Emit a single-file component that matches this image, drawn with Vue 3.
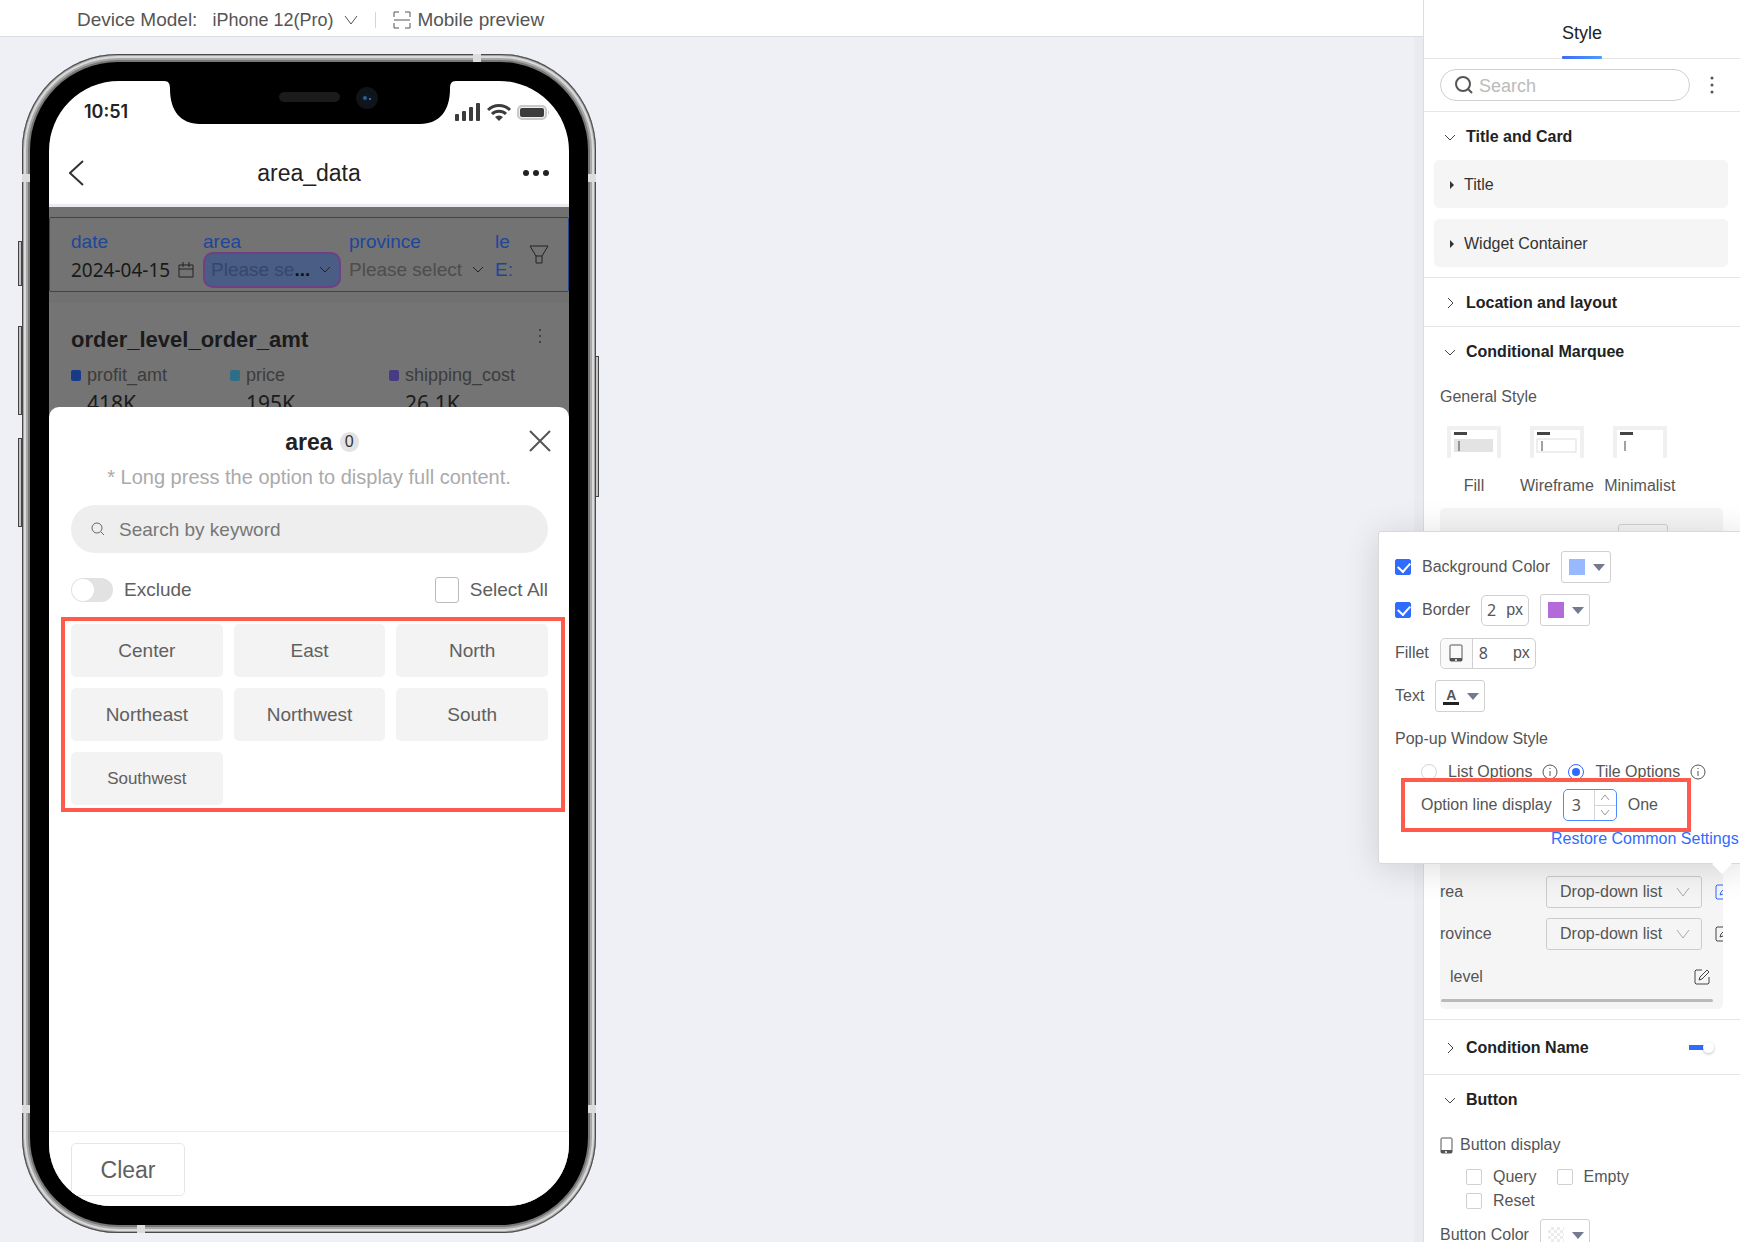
<template>
  <div class="page">
    <main class="workspace">
      <header class="toolbar">
        <label class="toolbar-label" for="device">Device Model:</label>
        <span class="device">
          <select id="device" v-model="device">
            <option>iPhone 12(Pro)</option>
          </select>
          <svg width="14" height="10" viewBox="0 0 14 10"><path d="M1 1l6 8 6-8" /></svg>
        </span>
        <span class="toolbar-split"></span>
        <button class="preview" type="button">
          <svg width="18" height="18" viewBox="0 0 18 18"><path d="M1 6V1h5M12 1h5v5M1 12v5h5M12 17h5v-5M1 9h16" /></svg>
          Mobile preview
        </button>
      </header>

      <div class="stage">
        <div class="phone">
          <i v-for="name in ['mute', 'vol-up', 'vol-down', 'power']" :key="name" class="key" :class="name"></i>
          <i v-for="name in ['lt', 'lb', 'rt', 'rb', 'top', 'bottom']" :key="name" class="band" :class="name"></i>
          <div class="bezel">
            <div class="screen">
              <svg class="notch" width="292" height="43" viewBox="0 0 292 43">
                <path fill="#000" d="M0 0C5 0 6 3 6 8C6 29 16 43 36 43H256C276 43 286 29 286 8C286 3 287 0 292 0Z" />
                <rect x="115" y="11" width="61" height="10" rx="5" fill="#1b1b1b" />
                <circle cx="203" cy="17" r="11" fill="#111317" />
                <circle cx="203" cy="17" r="6" fill="#0d1624" />
                <circle cx="201" cy="17" r="2" fill="#2f5e91" />
                <circle cx="206" cy="18" r="1" fill="#4b86bd" />
              </svg>
              <div class="status">
                <span class="clock">10:51</span>
                <span class="signals">
                  <svg width="26" height="18" viewBox="0 0 26 18" fill="#3c3c3c">
                    <rect x="0" y="11" width="4" height="7" rx="1" />
                    <rect x="7" y="8" width="4" height="10" rx="1" />
                    <rect x="14" y="4" width="4" height="14" rx="1" />
                    <rect x="21" y="0" width="4" height="18" rx="1" />
                  </svg>
                  <svg width="24" height="18" viewBox="0 0 24 18" fill="none" stroke="#3c3c3c" stroke-width="3">
                    <path d="M1 7a15.500 15.500 0 0 1 22 0M5 11a10 10 0 0 1 14 0" />
                    <path d="M8 14a6 6 0 0 1 8 0l-4 4z" fill="#3c3c3c" stroke="none" />
                  </svg>
                  <svg width="33" height="15" viewBox="0 0 33 15">
                    <rect x="1" y="1" width="28" height="13" rx="4" fill="#eee" stroke="#c9c9c9" stroke-width="2" />
                    <rect x="3" y="3" width="24" height="9" rx="2" fill="#3c3c3c" />
                    <path d="M31 5q2 2 0 5z" fill="#c9c9c9" />
                  </svg>
                </span>
              </div>
              <div class="nav">
                <button class="bare" type="button" aria-label="Back">
                  <svg width="15" height="26" viewBox="0 0 15 26" fill="none" stroke="#333" stroke-width="2"><path d="M14 1L1 13l13 12" /></svg>
                </button>
                <h1>area_data</h1>
                <button class="bare nav-more" type="button" aria-label="More">
                  <svg width="26" height="8" viewBox="0 0 26 8" fill="#222"><circle cx="3" cy="4" r="3" /><circle cx="13" cy="4" r="3" /><circle cx="23" cy="4" r="3" /></svg>
                </button>
              </div>

              <div class="body">
                <div class="filters">
                  <div class="filter date">
                    <span class="filter-name">date</span>
                    <span class="filter-value">2024-04-15
                      <svg width="16" height="16" viewBox="0 0 16 16"><path d="M1 3h14v12H1zM1 7h14M5 0v5M11 0v5" /></svg>
                    </span>
                  </div>
                  <div class="filter area">
                    <span class="filter-name">area</span>
                    <span class="filter-value boxed"><span>Please se<b>...</b></span>
                      <svg width="12" height="8" viewBox="0 0 12 8"><path d="M1 1l5 5 5-5" /></svg>
                    </span>
                  </div>
                  <div class="filter province">
                    <span class="filter-name">province</span>
                    <span class="filter-value muted">Please select
                      <svg width="12" height="8" viewBox="0 0 12 8"><path d="M1 1l5 5 5-5" /></svg>
                    </span>
                  </div>
                  <div class="filter cut">
                    <span class="filter-name">le</span>
                    <span class="filter-value link">E:</span>
                  </div>
                  <svg class="funnel" width="20" height="19" viewBox="0 0 20 19"><path d="M1 1h18l-6 10H7zM7 11v7h6v-7" /></svg>
                </div>
                <div class="card">
                  <div class="card-head">
                    <h2>order_level_order_amt</h2>
                    <svg width="4" height="16" viewBox="0 0 4 16" fill="#333"><circle cx="2" cy="2" r="1" /><circle cx="2" cy="8" r="1" /><circle cx="2" cy="14" r="1" /></svg>
                  </div>
                  <div class="metrics">
                    <div v-for="m in metrics" :key="m.name" class="metric">
                      <i :style="{ background: m.color }"></i>
                      <span>{{ m.name }}</span>
                      <strong>{{ m.value }}</strong>
                    </div>
                  </div>
                </div>

                <section class="sheet">
                  <div class="sheet-head">
                    <h2>area</h2>
                    <span class="count">0</span>
                    <button class="bare close" type="button" aria-label="Close">
                      <svg width="22" height="22" viewBox="0 0 22 22" fill="none" stroke="#555" stroke-width="2"><path d="M1 1l20 20M21 1L1 21" /></svg>
                    </button>
                  </div>
                  <p class="hint">* Long press the option to display full content.</p>
                  <div class="keyword">
                    <svg width="14" height="14" viewBox="0 0 14 14" fill="none" stroke="#666"><circle cx="6" cy="6" r="5" /><path d="M10 10l3 3" /></svg>
                    <input v-model="keyword" type="text" placeholder="Search by keyword" aria-label="Search by keyword" />
                  </div>
                  <div class="toggles">
                    <label><input v-model="exclude" class="switch" type="checkbox" />Exclude</label>
                    <label><input v-model="all" class="pick" type="checkbox" />Select All</label>
                  </div>
                  <div class="tiles">
                    <button v-for="a in areas" :key="a" type="button" :class="{ small: a === 'Southwest' }">{{ a }}</button>
                  </div>
                  <div class="sheet-foot">
                    <button type="button">Clear</button>
                  </div>
                </section>
              </div>
            </div>
          </div>
        </div>
      </div>
    </main>

    <aside class="panel">
      <div class="tabs"><button type="button">Style</button></div>
      <div class="find">
        <label class="find-box">
          <svg width="18" height="18" viewBox="0 0 18 18" fill="none" stroke="#555" stroke-width="2"><circle cx="8" cy="8" r="7" /><path d="M13 13l4 4" /></svg>
          <input v-model="search" type="text" placeholder="Search" aria-label="Search" />
        </label>
        <button class="bare" type="button" aria-label="Options">
          <svg width="4" height="18" viewBox="0 0 4 18" fill="#555"><circle cx="2" cy="2" r="1.500" /><circle cx="2" cy="9" r="1.500" /><circle cx="2" cy="16" r="1.500" /></svg>
        </button>
      </div>

      <section class="group">
        <h3><svg class="caret" width="12" height="12" viewBox="0 0 12 12"><path d="M1 4l5 5 5-5" /></svg>Title and Card</h3>
        <button v-for="t in ['Title', 'Widget Container']" :key="t" class="fold" type="button">
          <svg width="4" height="8" viewBox="0 0 4 8" fill="#333"><path d="M0 0l4 4-4 4z" /></svg>{{ t }}
        </button>
      </section>
      <section class="group closed">
        <h3><svg class="caret" width="12" height="12" viewBox="0 0 12 12"><path d="M4 1l5 5-5 5" /></svg>Location and layout</h3>
      </section>

      <section class="group">
        <h3><svg class="caret" width="12" height="12" viewBox="0 0 12 12"><path d="M1 4l5 5 5-5" /></svg>Conditional Marquee</h3>
        <p class="sub">General Style</p>
        <div class="looks">
          <button type="button">
            <svg width="54" height="32" viewBox="0 0 54 32"><path d="M2 32V2h50v30" fill="none" stroke="#f0f0f0" stroke-width="4" /><rect x="7" y="6" width="13" height="3" fill="#444" /><rect x="7" y="13" width="39" height="13" fill="#e3e3e3" /><path d="M12 15v10" stroke="#444" /></svg>
            Fill
          </button>
          <button type="button">
            <svg width="54" height="32" viewBox="0 0 54 32"><path d="M2 32V2h50v30" fill="none" stroke="#f0f0f0" stroke-width="4" /><rect x="7" y="6" width="13" height="3" fill="#444" /><rect x="7" y="13" width="39" height="13" fill="#fff" stroke="#ddd" /><path d="M12 15v10" stroke="#444" /></svg>
            Wireframe
          </button>
          <button type="button">
            <svg width="54" height="32" viewBox="0 0 54 32"><path d="M2 32V2h50v30" fill="none" stroke="#f0f0f0" stroke-width="4" /><rect x="7" y="6" width="13" height="3" fill="#444" /><path d="M12 15v10" stroke="#444" /></svg>
            Minimalist
          </button>
        </div>

        <div class="fields">
          <div class="fields-box">
            <button class="swatch ghost" type="button" aria-label="Color"></button>
            <div v-for="(f, i) in fields" :key="f" class="field">
              <label :for="'field-' + i">{{ f }}</label>
              <span class="drop">
                <select :id="'field-' + i"><option>Drop-down list</option></select>
                <svg width="14" height="10" viewBox="0 0 14 10"><path d="M1 1l6 8 6-8" /></svg>
              </span>
              <svg class="edit" :class="{ active: i === 0 }" width="16" height="16" viewBox="0 0 16 16"><path d="M8 1H2L1 2v12l1 1h12l1-1V8M5 11l1-3 7-7 2 2-7 7z" /></svg>
            </div>
            <div class="field level">
              <span>level</span>
              <svg class="edit" width="16" height="16" viewBox="0 0 16 16"><path d="M8 1H2L1 2v12l1 1h12l1-1V8M5 11l1-3 7-7 2 2-7 7z" /></svg>
            </div>
            <div class="scrollbar"></div>
          </div>

          <div class="popover">
            <div class="row">
              <label class="check"><input v-model="background" type="checkbox" />Background Color</label>
              <button class="swatch" type="button" aria-label="Background color"><i class="blue"></i><i class="tri"></i></button>
            </div>
            <div class="row">
              <label class="check"><input v-model="border" type="checkbox" />Border</label>
              <span class="unit"><input v-model="borderWidth" type="text" aria-label="Border width" />px</span>
              <button class="swatch" type="button" aria-label="Border color"><i class="purple"></i><i class="tri"></i></button>
            </div>
            <div class="row">
              <label for="fillet">Fillet</label>
              <span class="unit wide">
                <span class="unit-icon"><svg width="14" height="18" viewBox="0 0 14 18"><rect x="1" y="1" width="12" height="16" rx="1" fill="none" stroke="#555" /><path d="M1 14h12v3H1z" fill="#555" /><circle cx="7" cy="16" r="1" fill="#fff" /></svg></span>
                <input id="fillet" v-model="fillet" type="text" />px
              </span>
            </div>
            <div class="row">
              <span>Text</span>
              <button class="swatch" type="button" aria-label="Text color"><b>A</b><i class="tri"></i></button>
            </div>
            <div class="row">Pop-up Window Style</div>
            <div class="radios">
              <label><input v-model="mode" type="radio" name="mode" value="list" />List Options</label>
              <svg width="16" height="16" viewBox="0 0 16 16"><circle cx="8" cy="8" r="7" /><path d="M8 7v5M8 4v1" /></svg>
              <label><input v-model="mode" type="radio" name="mode" value="tile" />Tile Options</label>
              <svg width="16" height="16" viewBox="0 0 16 16"><circle cx="8" cy="8" r="7" /><path d="M8 7v5M8 4v1" /></svg>
            </div>
            <div class="per-line">
              <label for="per-line">Option line display</label>
              <span class="stepper">
                <input id="per-line" v-model.number="perLine" type="text" />
                <span class="steps">
                  <button type="button" aria-label="Increase" @click="perLine++"><svg width="8" height="6" viewBox="0 0 8 6"><path d="M0 6l4-5 4 5" /></svg></button>
                  <button type="button" aria-label="Decrease" @click="perLine--"><svg width="8" height="6" viewBox="0 0 8 6"><path d="M0 0l4 5 4-5" /></svg></button>
                </span>
              </span>
              <span>One</span>
            </div>
            <a href="#" class="restore" @click.prevent="perLine = 3">Restore Common Settings</a>
          </div>
        </div>
      </section>

      <section class="group closed named">
        <h3><svg class="caret" width="12" height="12" viewBox="0 0 12 12"><path d="M4 1l5 5-5 5" /></svg>Condition Name</h3>
        <input v-model="named" class="slide" type="checkbox" aria-label="Condition Name" />
      </section>

      <section class="group">
        <h3><svg class="caret" width="12" height="12" viewBox="0 0 12 12"><path d="M1 4l5 5 5-5" /></svg>Button</h3>
        <p class="sub">
          <svg width="13" height="17" viewBox="0 0 13 17"><rect x="1" y="1" width="11" height="15" rx="1" fill="none" stroke="#555" /><path d="M1 13h11v3H1z" fill="#555" /><circle cx="6" cy="15" r="1" fill="#fff" /></svg>
          Button display
        </p>
        <div class="buttons">
          <label v-for="b in ['Query', 'Empty', 'Reset']" :key="b" class="check"><input type="checkbox" />{{ b }}</label>
        </div>
        <div class="row color-row">
          <span>Button Color</span>
          <button class="swatch" type="button" aria-label="Button color"><i class="clear"></i><i class="tri"></i></button>
        </div>
      </section>
    </aside>
  </div>
</template>

<script setup>
import { ref } from 'vue';

const device = ref('iPhone 12(Pro)');
const keyword = ref('');
const search = ref('');
const exclude = ref(false);
const all = ref(false);
const background = ref(true);
const border = ref(true);
const borderWidth = ref('2');
const fillet = ref('8');
const mode = ref('tile');
const perLine = ref(3);
const named = ref(true);

const areas = ['Center', 'East', 'North', 'Northeast', 'Northwest', 'South', 'Southwest'];
const fields = ['rea', 'rovince'];
const metrics = [
  { name: 'profit_amt', value: '418K', color: '#173b86' },
  { name: 'price', value: '195K', color: '#2f6e86' },
  { name: 'shipping_cost', value: '26.1K', color: '#463c82' },
];
</script>

<style>
body {
  margin: 0;
}
</style>

<style scoped>
.page,
.page * {
  box-sizing: border-box;
}
.page {
  display: flex;
  height: 100vh;
  overflow: hidden;
  background: #fff;
  color: #555;
  font: 16px/20px 'Liberation Sans', Arial, sans-serif;
}
h1, h2, h3, p {
  margin: 0;
}
button, input, select {
  font: inherit;
  color: inherit;
}
button {
  cursor: pointer;
}
svg {
  flex-shrink: 0;
}
.bare {
  display: flex;
  padding: 0;
  border: 0;
  background: none;
}
select {
  appearance: none;
  border: 0;
  background: none;
  padding: 0;
}
input[type='text'] {
  min-width: 0;
  border: 0;
  padding: 0;
  background: none;
  outline: 0;
}
input[type='checkbox'],
input[type='radio'] {
  appearance: none;
  flex-shrink: 0;
  margin: 0;
}

/* workspace */
.workspace {
  display: flex;
  flex: 1;
  flex-direction: column;
  min-width: 0;
}
.toolbar {
  display: flex;
  align-items: center;
  height: 37px;
  padding: 4px 0 0 77px;
  border-bottom: 1px solid #dcdde0;
  font-size: 19px;
}
.device {
  display: flex;
  align-items: center;
  gap: 10px;
  margin-left: 15px;
}
.device select {
  font-size: 18px;
}
.device svg,
.preview svg {
  fill: none;
  stroke: #555;
  stroke-width: 1;
}
.toolbar-split {
  width: 1px;
  height: 16px;
  margin: 0 17px;
  background: #d5d5d5;
}
.preview {
  display: flex;
  align-items: center;
  gap: 6px;
  padding: 0;
  border: 0;
  background: none;
}
.stage {
  display: flex;
  flex: 1;
  min-height: 0;
  padding: 17px 22px 9px;
  background: #eff0f5;
  border-right: 9px solid #eaebf0;
}

/* device mock */
.phone {
  position: relative;
  width: 574px;
  padding: 8px;
  border-radius: 96px;
  background: #777;
  box-shadow: inset 0 0 0 1px #4a4a4a, inset 0 0 0 2px #a5a5a5, inset 0 0 0 4px #dadada, inset 0 0 0 6px #a8a8a8;
}
.key {
  position: absolute;
  left: -4px;
  width: 4px;
  border: 1px solid #444;
  background: #c4c4c4;
}
.mute { top: 187px; height: 45px; }
.vol-up { top: 272px; height: 89px; }
.vol-down { top: 384px; height: 89px; }
.power { top: 302px; right: -3px; left: auto; height: 141px; }
.band {
  position: absolute;
  width: 8px;
  height: 8px;
  background: #dcdcdc;
}
.lt { top: 120px; left: 0; }
.rt { top: 120px; right: 0; }
.lb { bottom: 120px; left: 0; }
.rb { bottom: 120px; right: 0; }
.top { top: 0; right: 115px; }
.bottom { bottom: 0; left: 115px; }
.bezel {
  height: 100%;
  padding: 19px;
  border-radius: 88px;
  background: #000;
}
.screen {
  position: relative;
  display: flex;
  flex-direction: column;
  height: 100%;
  overflow: hidden;
  border-radius: 70px 70px 62px 62px;
  background: #fff;
}
.notch {
  position: absolute;
  top: 0;
  left: 115px;
}
.status {
  display: flex;
  align-items: center;
  justify-content: space-between;
  height: 62px;
  padding: 0 19px 0 35px;
}
.clock {
  color: #222;
  font: 600 18px/20px Inter, sans-serif;
}
.signals {
  display: flex;
  align-items: center;
  gap: 6px;
}
.nav {
  display: grid;
  grid-template-columns: 1fr auto 1fr;
  align-items: center;
  height: 64px;
  padding: 0 20px 2px;
  border-bottom: 3px solid #ebecf0;
}
.nav h1 {
  color: #222;
  font-size: 23px;
  font-weight: 400;
}
.nav-more {
  justify-self: end;
}
.body {
  position: relative;
  flex: 1;
  overflow: hidden;
  padding-top: 10px;
  background: #717171;
}
.filters {
  display: flex;
  height: 75px;
  padding: 14px 19px 0 21px;
  border: 1px solid #24478c;
  border-radius: 2px;
  background: #737373;
}
.filter {
  display: flex;
  flex-direction: column;
  color: #1d469b;
  font-size: 19px;
}
.filter-value {
  display: flex;
  align-items: center;
  gap: 8px;
  height: 36px;
  color: #191919;
}
.filter-value svg,
.funnel {
  fill: none;
  stroke: #222;
}
.date {
  width: 132px;
}
.date .filter-value {
  font-family: 'Noto Sans', sans-serif;
}
.area {
  width: 146px;
}
.filter-value.boxed {
  justify-content: space-between;
  width: 138px;
  padding: 0 8px 0 6px;
  border: 2px solid #713f85;
  border-radius: 10px;
  background: #4a5d85;
  color: #35476b;
}
.boxed b {
  color: #111;
}
.province {
  width: 146px;
}
.filter-value.muted {
  gap: 10px;
  color: #4d4d4d;
}
.cut {
  width: 18px;
  overflow: hidden;
}
.filter-value.link {
  color: #1d469b;
}
.funnel {
  margin: 13px 0 0 auto;
}
.card {
  margin-top: 11px;
  padding: 25px 22px 0;
  background: #747474;
}
.card-head {
  display: flex;
  justify-content: space-between;
  padding-right: 5px;
}
.card h2 {
  color: #1b1b1b;
  font-size: 22px;
  line-height: 24px;
}
.metrics {
  display: flex;
  margin-top: 13px;
}
.metric {
  display: grid;
  grid-template-columns: 10px 1fr;
  gap: 6px;
  align-items: center;
  width: 159px;
  flex-shrink: 0;
  color: #3c3c3c;
  font-size: 18px;
}
.metric i {
  height: 11px;
  border-radius: 2px;
}
.metric strong {
  grid-column: 2;
  color: #1b1b1b;
  font: 21px/24px 'Noto Sans', sans-serif;
}

/* bottom sheet */
.sheet {
  position: absolute;
  inset: 200px 0 0;
  display: flex;
  flex-direction: column;
  border-radius: 10px 10px 0 0;
  background: #fff;
  color: #606060;
  font-size: 19px;
}
.sheet-head {
  position: relative;
  display: flex;
  align-items: center;
  justify-content: center;
  gap: 7px;
  height: 48px;
  padding: 22px 0 0 26px;
}
.sheet h2 {
  color: #222;
  font-size: 23px;
}
.count {
  width: 19px;
  border-radius: 10px;
  background: #e3e3e3;
  color: #333;
  font-size: 16px;
  text-align: center;
}
.close {
  position: absolute;
  top: 23px;
  right: 18px;
}
.hint {
  margin-top: 10px;
  color: #aaa;
  font-size: 20px;
  line-height: 24px;
  text-align: center;
}
.keyword {
  display: flex;
  align-items: center;
  gap: 14px;
  height: 48px;
  margin: 16px 21px 0 22px;
  padding: 0 20px;
  border-radius: 24px;
  background: #eee;
}
.keyword input {
  flex: 1;
  padding-top: 2px;
}
.keyword input::placeholder {
  color: #777;
}
.toggles {
  display: flex;
  justify-content: space-between;
  margin: 24px 21px 14px 22px;
}
.toggles label {
  display: flex;
  align-items: center;
  gap: 11px;
}
.switch {
  width: 42px;
  height: 24px;
  padding: 1px;
  border-radius: 12px;
  background: #e2e2e2;
}
.switch::before {
  content: '';
  display: block;
  width: 22px;
  height: 22px;
  border-radius: 50%;
  background: #fff;
}
.pick {
  width: 24px;
  height: 26px;
  border: 1px solid #bbb;
  border-radius: 3px;
}
.tiles {
  display: grid;
  grid-template-columns: repeat(3, 1fr);
  gap: 11px;
  margin: 0 4px 0 12px;
  padding: 3px 13px 3px 6px;
  border: 4px solid #ff5a4c;
}
.tiles button {
  height: 53px;
  padding: 0;
  border: 0;
  border-radius: 5px;
  background: #f3f3f3;
}
.tiles .small {
  font-size: 17px;
}
.sheet-foot {
  margin-top: auto;
  padding: 11px 22px 10px;
  border-top: 1px solid #ececec;
}
.sheet-foot button {
  width: 114px;
  height: 53px;
  border: 1px solid #e6e6e6;
  border-radius: 5px;
  background: #fff;
  font-size: 23px;
}

/* style panel */
.panel {
  width: 317px;
  flex-shrink: 0;
  border-left: 1px solid #dcdde0;
  background: #fff;
}
.tabs {
  display: flex;
  justify-content: center;
  border-bottom: 1px solid #e6e6e6;
}
.tabs button {
  position: relative;
  height: 58px;
  padding: 7px 0 0;
  border: 0;
  background: none;
  color: #222;
  font-size: 18px;
}
.tabs button::after {
  content: '';
  position: absolute;
  right: 0;
  bottom: -1px;
  left: 0;
  height: 3px;
  border-radius: 1px;
  background: linear-gradient(90deg, #3f6cf6, #4a9cff);
}
.find {
  display: flex;
  align-items: center;
  gap: 20px;
  padding: 10px 26px 10px 16px;
  border-bottom: 1px solid #e6e6e6;
}
.find-box {
  display: flex;
  flex: 1;
  align-items: center;
  gap: 6px;
  min-width: 0;
  height: 32px;
  padding: 0 14px;
  border: 1px solid #d0d0d0;
  border-radius: 16px;
  font-size: 18px;
}
.find-box input {
  flex: 1;
  padding-top: 2px;
}
.find-box input::placeholder {
  color: #bbb;
}
.group {
  padding-bottom: 10px;
  border-bottom: 1px solid #e6e6e6;
}
.group:last-child {
  border: 0;
}
.group h3 {
  display: flex;
  align-items: center;
  gap: 10px;
  height: 48px;
  padding: 2px 0 0 20px;
  color: #222;
  font-size: 16px;
}
.group.closed {
  padding-bottom: 0;
}
.caret {
  fill: none;
  stroke: #444;
}
.fold {
  display: flex;
  align-items: center;
  gap: 10px;
  width: calc(100% - 22px);
  height: 48px;
  margin: 0 12px 11px 10px;
  padding: 2px 16px 0;
  border: 0;
  border-radius: 5px;
  background: #f5f5f5;
  color: #333;
}
.fold:last-child {
  margin-bottom: 0;
}
.sub {
  display: flex;
  align-items: center;
  gap: 7px;
  margin-top: 12px;
  padding-left: 16px;
}
.looks {
  display: flex;
  gap: 10px;
  padding: 19px 0 0 14px;
}
.looks button {
  display: flex;
  flex-direction: column;
  align-items: center;
  gap: 18px;
  min-width: 72px;
  padding: 0;
  border: 0;
  background: none;
}

/* fields list with its popover */
.fields {
  position: relative;
  margin: 12px 17px 0 16px;
}
.fields-box {
  overflow: hidden;
  padding: 16px 0 7px;
  border-radius: 5px;
  background: #f5f5f5;
}
.swatch {
  display: flex;
  align-items: center;
  gap: 8px;
  width: 50px;
  height: 32px;
  padding: 0 7px;
  border: 1px solid #d0d0d0;
  border-radius: 3px;
  background: #fff;
}
.swatch i,
.swatch b {
  flex-shrink: 0;
}
.ghost {
  margin: 0 0 320px 178px;
  background: #f5f5f5;
}
.field {
  display: flex;
  align-items: center;
  height: 32px;
  margin-bottom: 10px;
}
.field label {
  width: 106px;
  flex-shrink: 0;
}
.drop {
  position: relative;
  display: flex;
  width: 156px;
  flex-shrink: 0;
}
.drop select {
  width: 100%;
  height: 32px;
  padding-left: 13px;
  border: 1px solid #ccc;
  border-radius: 3px;
}
.drop svg {
  position: absolute;
  top: 11px;
  right: 12px;
  fill: none;
  stroke: #aaa;
}
.edit {
  margin-left: 13px;
  fill: none;
  stroke: #444;
}
.edit.active {
  stroke: #2f6bff;
}
.field.level {
  justify-content: space-between;
  margin-bottom: 7px;
  padding: 2px 13px 0 10px;
}
.scrollbar {
  width: 272px;
  height: 3px;
  margin-left: 1px;
  border-radius: 2px;
  background: #bababa;
}
.popover {
  position: absolute;
  top: 23px;
  right: -25px;
  left: -62px;
  height: 333px;
  padding: 19px 0 0 16px;
  border: 1px solid #d9d9d9;
  border-radius: 3px;
  background: #fff;
  box-shadow: 0 4px 36px rgba(0, 0, 0, 0.14);
}
.popover::after {
  content: '';
  position: absolute;
  right: 18px;
  bottom: -8px;
  width: 14px;
  height: 14px;
  background: #fff;
  transform: rotate(45deg);
}
.row {
  display: flex;
  align-items: center;
  gap: 11px;
  height: 32px;
  margin-bottom: 11px;
}
.check {
  display: flex;
  align-items: center;
  gap: 11px;
}
.check input {
  width: 16px;
  height: 16px;
  border: 1px solid #d0d0d0;
  border-radius: 2px;
}
.check input:checked {
  border-color: #2f6bff;
  background: #2f6bff;
}
.check input:checked::before {
  content: '';
  display: block;
  width: 6px;
  height: 10px;
  margin: 0 0 0 4px;
  border: solid #fff;
  border-width: 0 2px 2px 0;
  transform: rotate(42deg);
}
.swatch .tri {
  border: solid transparent;
  border-width: 7px 6px 0;
  border-top-color: #737a90;
}
.blue, .purple, .clear {
  width: 16px;
  height: 16px;
  background: #99b9ff;
}
.purple {
  background: #b36bd9;
}
.clear {
  background: repeating-conic-gradient(#ececec 0 25%, #fff 0 50%) 0 0 / 6px 6px;
}
.swatch b {
  width: 16px;
  border-bottom: 3px solid #222;
  font-size: 14px;
  line-height: 14px;
}
.unit {
  display: flex;
  align-items: center;
  width: 48px;
  height: 31px;
  padding: 0 5px;
  border: 1px solid #d0d0d0;
  border-radius: 5px;
}
.unit input {
  flex: 1;
  width: 0;
  font-family: 'Noto Sans', sans-serif;
}
.unit.wide {
  width: 96px;
  padding-left: 0;
}
.unit-icon {
  display: grid;
  place-items: center;
  width: 32px;
  height: 100%;
  margin-right: 6px;
  border-right: 1px solid #d0d0d0;
  background: #fafafa;
  border-radius: 5px 0 0 5px;
}
.radios {
  display: flex;
  align-items: center;
  gap: 10px;
  height: 16px;
  margin-top: -2px;
  padding-left: 26px;
}
.radios label {
  display: flex;
  align-items: center;
  gap: 11px;
}
.radios svg {
  fill: none;
  stroke: #555;
}
.radios input {
  display: grid;
  place-items: center;
  width: 16px;
  height: 16px;
  border: 1px solid #d5d5d5;
  border-radius: 50%;
}
.radios input:checked {
  border-color: #2f6bff;
}
.radios input:checked::before {
  content: '';
  width: 8px;
  height: 8px;
  border-radius: 50%;
  background: #2f6bff;
}
.per-line {
  position: relative;
  display: flex;
  align-items: center;
  gap: 11px;
  width: 290px;
  height: 54px;
  margin: -2px 0 0 6px;
  padding-left: 16px;
  border: 4px solid #ff5a4c;
  background: #fff;
}
.stepper {
  display: flex;
  width: 54px;
  height: 32px;
  border: 1px solid #4a8cff;
  border-radius: 5px;
}
.stepper input[type='text'] {
  flex: 1;
  padding-left: 8px;
  font-family: 'Noto Sans', sans-serif;
}
.steps {
  display: flex;
  flex-direction: column;
  width: 22px;
  flex-shrink: 0;
  border-left: 1px solid #d5d5d5;
}
.steps button {
  display: grid;
  flex: 1;
  place-items: center;
  padding: 0;
  border: 0;
  background: none;
}
.steps button + button {
  border-top: 1px solid #d5d5d5;
}
.steps svg {
  fill: none;
  stroke: #999;
}
.restore {
  display: block;
  margin-left: 156px;
  color: #2f6bff;
  line-height: 14px;
  text-decoration: none;
  white-space: nowrap;
}
.named {
  display: flex;
  align-items: center;
  justify-content: space-between;
  height: 55px;
  padding-right: 26px;
}
.slide {
  display: flex;
  align-items: center;
  justify-content: flex-end;
  width: 25px;
  height: 12px;
  background: linear-gradient(#2f6bff, #2f6bff) 0 50% / 16px 5px no-repeat;
}
.slide::before {
  content: '';
  width: 11px;
  height: 11px;
  border-radius: 50%;
  background: #fff;
  box-shadow: 0 1px 3px rgba(0, 0, 0, 0.25);
}
.buttons {
  display: grid;
  grid-template-columns: auto 1fr;
  gap: 4px 20px;
  margin: 12px 0 8px 42px;
}
.color-row {
  padding-left: 16px;
}
</style>
